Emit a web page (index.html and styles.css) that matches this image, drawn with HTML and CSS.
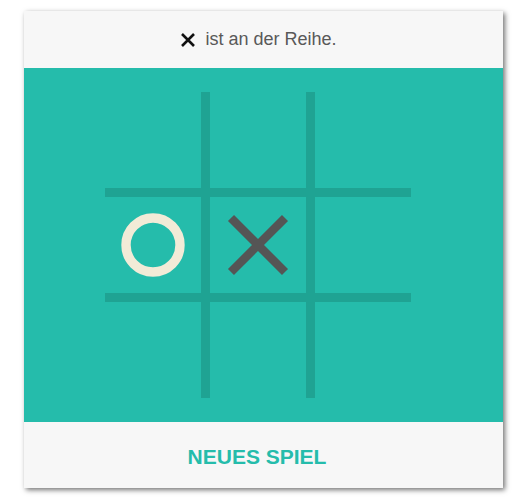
FILE: index.html
```html
<!DOCTYPE html>
<html lang="de">
<head>
<meta charset="utf-8">
<title>Tic Tac Toe</title>
<link rel="stylesheet" href="styles.css">
</head>
<body>
<div class="card">
  <div class="status">
    <svg class="status-icon" width="14" height="14" viewBox="0 0 14 14"><path d="M1 1L13 13M13 1L1 13" stroke="#111" stroke-width="2.6" fill="none"/></svg>
    <span>ist an der Reihe.</span>
  </div>
  <div class="board-area">
    <div class="board">
      <div class="cell"></div>
      <div class="cell"></div>
      <div class="cell"></div>
      <div class="cell">
        <svg width="64" height="64" viewBox="0 0 64 64"><circle cx="32" cy="32" r="27" stroke="#f2ebd7" stroke-width="9.4" fill="none"/></svg>
      </div>
      <div class="cell">
        <svg width="62" height="62" viewBox="0 0 62 62"><path d="M4 4L58 58M58 4L4 58" stroke="#555555" stroke-width="8.5" fill="none"/></svg>
      </div>
      <div class="cell"></div>
      <div class="cell"></div>
      <div class="cell"></div>
      <div class="cell"></div>
    </div>
  </div>
  <div class="footer">
    <button class="new-game">NEUES SPIEL</button>
  </div>
</div>
</body>
</html>
```

FILE: styles.css
```css
html, body {
  margin: 0;
  padding: 0;
  background: #ffffff;
}
body {
  padding: 11px 0 12px 24px;
  min-height: 500px;
  box-sizing: border-box;
  font-family: "Liberation Sans", Arial, sans-serif;
}
.card {
  width: 479px;
  background: #f7f7f7;
  box-shadow: 2px 2px 5px rgba(0, 0, 0, 0.55);
}
.status {
  height: 57px;
  display: flex;
  align-items: center;
  justify-content: center;
  gap: 10px;
  font-size: 18px;
  color: #595959;
  padding-right: 9px;
  box-sizing: border-box;
}
.status-icon {
  display: block;
  margin-top: 1px;
}
.board-area {
  height: 354px;
  background: #25bcab;
  padding: 24px 0 0 81px;
  box-sizing: border-box;
}
.board {
  width: 306px;
  height: 306px;
  display: grid;
  grid-template-columns: repeat(3, 96px);
  grid-template-rows: repeat(3, 96px);
  gap: 9px;
  background: #1fa393;
}
.cell {
  background: #25bcab;
  display: flex;
  align-items: center;
  justify-content: center;
}
.cell svg {
  display: block;
}
.footer {
  height: 66px;
  display: flex;
  align-items: center;
  justify-content: center;
}
.new-game {
  border: none;
  background: transparent;
  font-family: "Liberation Sans", Arial, sans-serif;
  font-weight: bold;
  font-size: 21px;
  color: #25bcab;
  padding: 0;
  margin-top: 4px;
  margin-right: 13px;
}
```
